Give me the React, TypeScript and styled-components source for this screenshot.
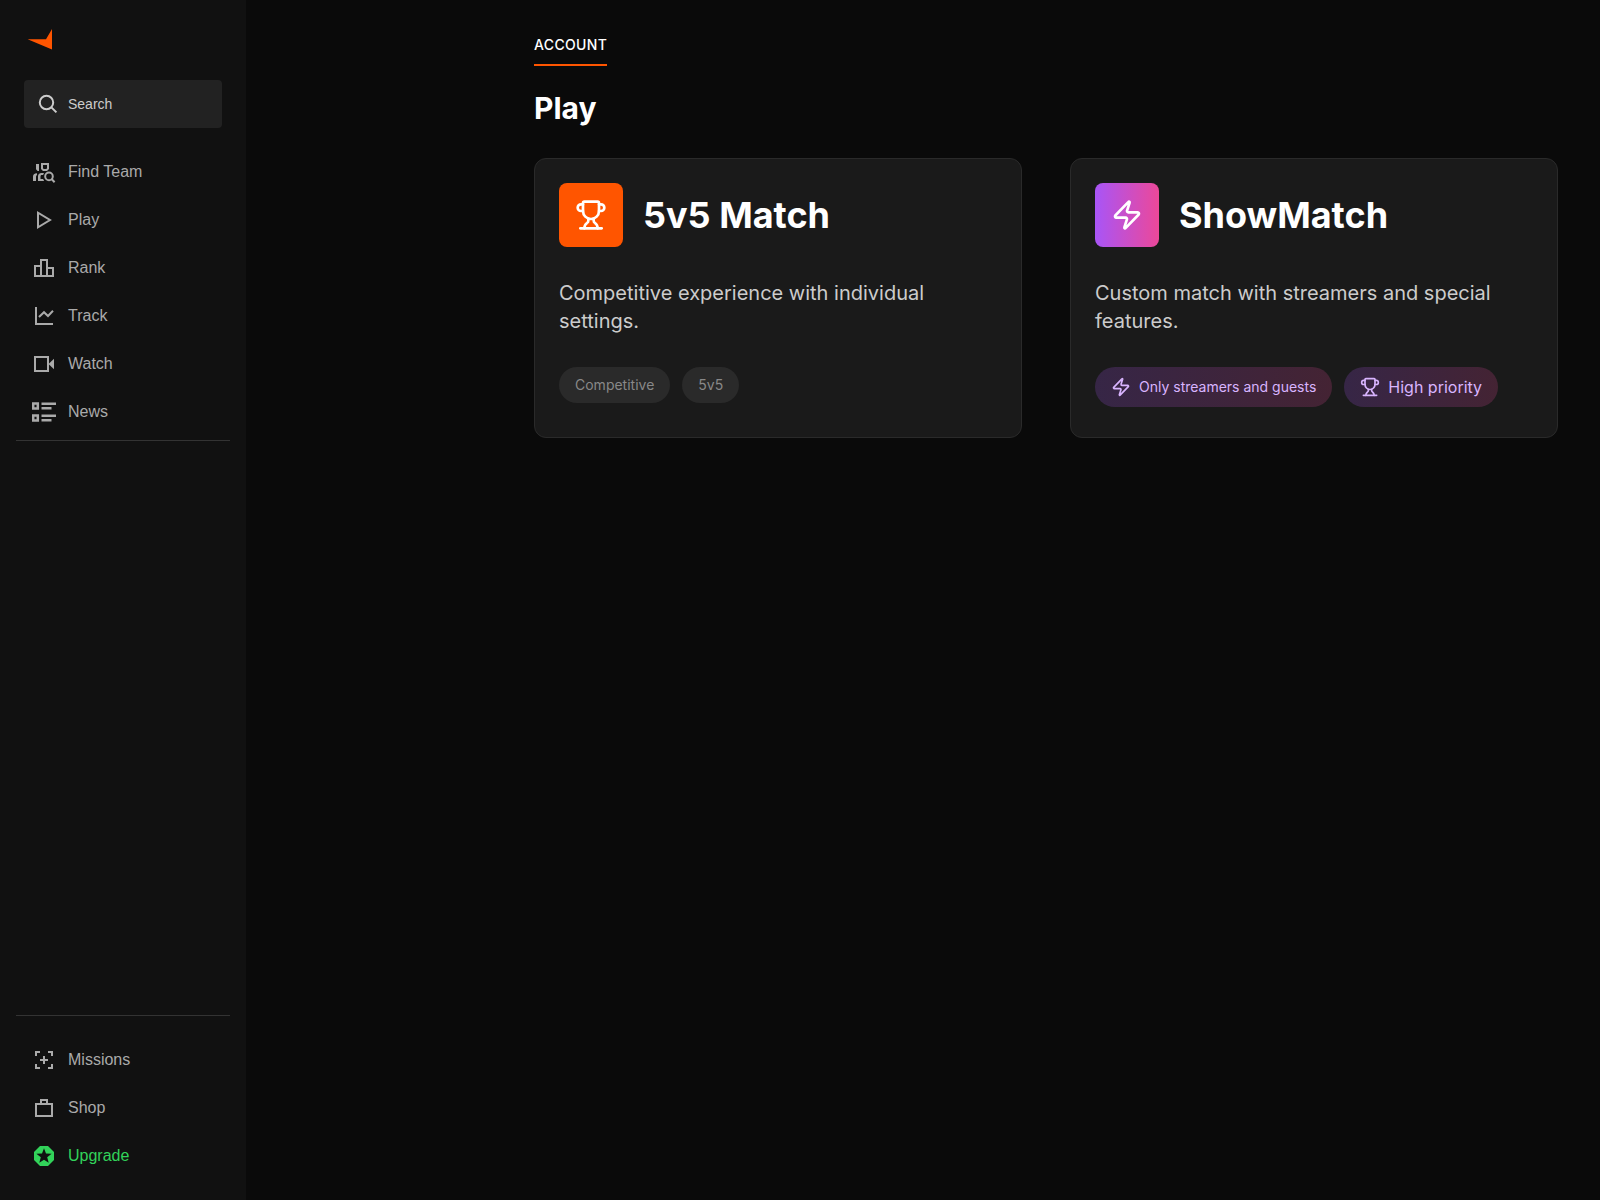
import React from "react";
import styled, { createGlobalStyle } from "styled-components";
import { Trophy, Zap } from "lucide-react";

const GlobalStyle = createGlobalStyle`
  *, *::before, *::after { box-sizing: border-box; }
  body { margin: 0; background: #0a0a0a; }
  h1, h2, p { margin: 0; }
`;

const Page = styled.div`
  display: flex;
  height: 1200px;
  background: #0a0a0a;
  color: #fff;
  font-family: Inter, sans-serif;
`;

const Sidebar = styled.aside`
  display: flex;
  flex-direction: column;
  width: 246px;
  flex: none;
  padding: 24px 16px 20px;
  background: #111;
  font-family: "Liberation Sans", Arial, sans-serif;
`;

const Logo = styled.svg`
  display: block;
  width: 32px;
  height: 32px;
  margin: 0 0 24px 8px;
`;

const SearchBox = styled.button`
  display: flex;
  align-items: center;
  gap: 8px;
  height: 48px;
  margin: 0 8px 20px;
  padding: 0 12px;
  border: 0;
  border-radius: 4px;
  background: #222;
  color: #ccc;
  font: 14px/20px "Liberation Sans", Arial, sans-serif;
`;

const Nav = styled.nav<{ $bottom?: boolean }>`
  display: flex;
  flex-direction: column;
  ${(p) =>
    p.$bottom
      ? "margin-top: auto; padding-top: 20px; border-top: 1px solid #333;"
      : "padding-bottom: 4px; border-bottom: 1px solid #333;"}
`;

const NavItem = styled.a<{ $accent?: boolean }>`
  display: flex;
  align-items: center;
  gap: 12px;
  height: 48px;
  padding: 0 16px;
  color: ${(p) => (p.$accent ? "#32d35a" : "#aaa")};
  font-size: 16px;
  line-height: 24px;
`;

const Glyph = styled.svg`
  width: 24px;
  height: 24px;
  flex: none;
  fill: none;
  stroke: currentColor;
  stroke-width: 2;
`;

const Main = styled.main`
  flex: 1;
  padding: 32px 42px 0 288px;
`;

const Tabs = styled.div`
  display: flex;
`;

const Tab = styled.div`
  height: 34px;
  padding-top: 3px;
  border-bottom: 2px solid #ff5500;
  font-size: 14px;
  font-weight: 500;
  line-height: 20px;
  letter-spacing: 0.025em;
`;

const Heading = styled.h1`
  margin: 24px 0 32px;
  font-size: 30px;
  font-weight: 700;
  line-height: 36px;
`;

const Cards = styled.div`
  display: grid;
  grid-template-columns: 1fr 1fr;
  gap: 48px;
`;

const Card = styled.section`
  height: 280px;
  padding: 24px;
  border: 1px solid #2a2a2a;
  border-radius: 12px;
  background: #1a1a1a;
`;

const CardHeader = styled.div`
  display: flex;
  align-items: center;
  gap: 20px;
  margin-bottom: 32px;
`;

const IconTile = styled.div<{ $fill: string }>`
  display: grid;
  place-items: center;
  width: 64px;
  height: 64px;
  border-radius: 8px;
  background: ${(p) => p.$fill};
`;

const CardTitle = styled.h2`
  font-size: 36px;
  font-weight: 700;
  line-height: 40px;
`;

const Description = styled.p`
  margin-bottom: 32px;
  color: #ccc;
  font-size: 20px;
  line-height: 28px;
`;

const Tags = styled.div`
  display: flex;
  gap: 12px;
`;

const Tag = styled.span<{ $special?: boolean; $large?: boolean }>`
  display: flex;
  align-items: center;
  gap: 8px;
  padding: 8px 16px;
  border-radius: 20px;
  font-size: ${(p) => (p.$large ? "16px" : "14px")};
  line-height: ${(p) => (p.$large ? "24px" : "20px")};
  color: ${(p) => (p.$special ? "#d8b4fe" : "#888")};
  background: ${(p) =>
    p.$special
      ? "linear-gradient(to right, rgba(168, 85, 247, 0.2), rgba(236, 72, 153, 0.2))"
      : "#2a2a2a"};
`;

const FindTeamIcon = () => (
  <Glyph viewBox="0 0 24 24">
    <path
      d="M4 4h3v7H5.6L4 9.2z M1 21v-4.4C1 14.6 2.2 13.3 5 13.3v1.8c-.7.3-1 .9-1 1.7V21z M6 21v-4.4C6 14.3 7.3 13 9.6 13H12l-.9 2H9.8c-.9 0-1.3.5-1.3 1.5V19h2.6l1 2z"
      fill="currentColor"
      stroke="none"
    />
    <path d="M10 4h6v4.6L14.6 10h-3.2L10 8.6z" />
    <circle cx="17" cy="16.4" r="3.8" />
    <path d="M19.6 19l3 3.2" />
  </Glyph>
);

const PlayIcon = () => (
  <Glyph viewBox="0 0 24 24"><path d="M6 4.7v14.6L18 12z" /></Glyph>
);

const RankIcon = () => (
  <Glyph viewBox="0 0 24 24">
    <path d="M9 10H3v10h18v-8h-6M9 20V4h6v16" />
  </Glyph>
);

const TrackIcon = () => (
  <Glyph viewBox="0 0 24 24">
    <path d="M4 3v17h17M7 13l5-4.8 4 3.8 5-5.2" />
  </Glyph>
);

const WatchIcon = () => (
  <Glyph viewBox="0 0 24 24">
    <path d="M3 5h13v14H3z" />
    <path d="M16.5 12l5.5-5.3v10.6z" fill="currentColor" stroke="none" />
  </Glyph>
);

const NewsIcon = () => (
  <Glyph viewBox="0 0 24 24">
    <path d="M1.2 3.4h4.6v5.2H1.2zM1.2 15.4h4.6v5.2H1.2z" strokeWidth="2.5" />
    <path d="M9.5 3.7H24M9.5 8.3h10M9.5 15.7H24M9.5 20.3h10" strokeWidth="2.4" />
  </Glyph>
);

const MissionsIcon = () => (
  <Glyph viewBox="0 0 24 24">
    <path d="M8 4H4v4M16 4h4v4M8 20H4v-4M16 20h4v-4M12 8v8M8 12h8" />
  </Glyph>
);

const ShopIcon = () => (
  <Glyph viewBox="0 0 24 24">
    <path d="M4 8h16v12H4zM9 8V4h6v4" />
  </Glyph>
);

const UpgradeIcon = () => (
  <Glyph viewBox="0 0 24 24">
    <path d="M8 2h8l6 6v8l-6 6H8l-6-6V8z" fill="currentColor" stroke="none" />
    <path
      d="M12 4.3l2 5.25 5.6.25-4.4 3.55 1.5 5.45L12 15.7l-4.7 3.1 1.5-5.45L4.4 9.8l5.6-.25z"
      fill="#111"
      stroke="none"
    />
  </Glyph>
);

const primaryLinks = [
  { label: "Find Team", Icon: FindTeamIcon },
  { label: "Play", Icon: PlayIcon },
  { label: "Rank", Icon: RankIcon },
  { label: "Track", Icon: TrackIcon },
  { label: "Watch", Icon: WatchIcon },
  { label: "News", Icon: NewsIcon },
];

const secondaryLinks = [
  { label: "Missions", Icon: MissionsIcon },
  { label: "Shop", Icon: ShopIcon },
  { label: "Upgrade", Icon: UpgradeIcon, accent: true },
];

export default function App() {
  return (
    <Page>
      <GlobalStyle />
      <Sidebar>
        <Logo viewBox="0 0 32 32">
          <path d="M28 5v20.4L3.6 15.2H22z" fill="#ff5500" />
        </Logo>
        <SearchBox>
          <Glyph viewBox="0 0 24 24">
            <circle cx="10.5" cy="10.5" r="6.7" />
            <path d="M15.4 15.4l5 5" />
          </Glyph>
          Search
        </SearchBox>
        <Nav>
          {primaryLinks.map(({ label, Icon }) => (
            <NavItem key={label}><Icon />{label}</NavItem>
          ))}
        </Nav>
        <Nav $bottom>
          {secondaryLinks.map(({ label, Icon, accent }) => (
            <NavItem key={label} $accent={accent}><Icon />{label}</NavItem>
          ))}
        </Nav>
      </Sidebar>
      <Main>
        <Tabs><Tab>ACCOUNT</Tab></Tabs>
        <Heading>Play</Heading>
        <Cards>
          <Card>
            <CardHeader>
              <IconTile $fill="#ff5500"><Trophy size={32} color="#fff" /></IconTile>
              <CardTitle>5v5 Match</CardTitle>
            </CardHeader>
            <Description>Competitive experience with individual settings.</Description>
            <Tags>
              <Tag>Competitive</Tag>
              <Tag>5v5</Tag>
            </Tags>
          </Card>
          <Card>
            <CardHeader>
              <IconTile $fill="linear-gradient(to right, #a855f7, #ec4899)">
                <Zap size={32} color="#fff" />
              </IconTile>
              <CardTitle>ShowMatch</CardTitle>
            </CardHeader>
            <Description>Custom match with streamers and special features.</Description>
            <Tags>
              <Tag $special><Zap size={20} />Only streamers and guests</Tag>
              <Tag $special $large><Trophy size={20} />High priority</Tag>
            </Tags>
          </Card>
        </Cards>
      </Main>
    </Page>
  );
}
